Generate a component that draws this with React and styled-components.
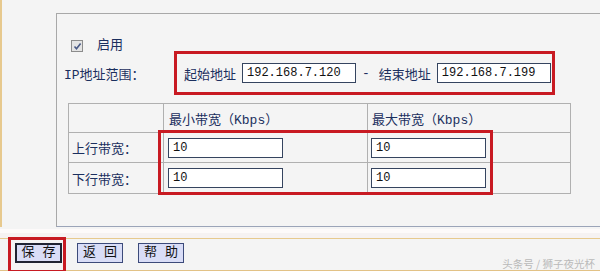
import React from 'react';
import styled, { createGlobalStyle } from 'styled-components';

const GlobalStyle = createGlobalStyle`
	html, body {
		margin:0;
		padding:0;
		background:#f4f4f4;
		overflow:hidden;
	}
	body {
		font-family:"Liberation Mono", "Noto Sans CJK SC", monospace;
		font-size:13px;
		color:#1b2f5e;
	}
`;

export const Page = styled.div`
	width:600px;
	height:271px;
	display:flex;
	flex-direction:column;
	background:#f4f4f4;
`;

export const Upper = styled.div`
	height:227px;
	padding:13px 0 0 54px;
	border-left:2px solid #e7c98e;
	box-sizing:border-box;
`;

export const Panel = styled.div`
	height:214px;
	box-sizing:border-box;
	border-top:1px solid #a8a8a8;
	border-left:1px solid #a8a8a8;
	border-bottom:1px solid #9ba4b8;
	display:flex;
	flex-direction:column;
	padding:26px 0 0 7px;
`;

export const CheckRow = styled.label`
	display:flex;
	align-items:center;
	padding-left:7px;
	height:12px;
	gap:14px;
	line-height:12px;
`;

export const CheckBox = styled.span`
	width:10px;
	height:10px;
	border:1px solid #8c8c8c;
	background:#e4e4e4;
	display:flex;
	align-items:center;
	justify-content:center;
`;

export const Row = styled.div`
	display:flex;
	align-items:center;
	margin-top:${props => props.top || 0}px;
`;

export const Label = styled.span`
	width:${props => props.width}px;
	flex:none;
	white-space:nowrap;
`;

export const AddrGroup = styled.div`
	display:flex;
	align-items:center;
	border:3px solid #c81a22;
	padding:9px 1px 9px 7px;
	white-space:nowrap;
`;

export const Field = styled.input`
	width:${props => props.width || 115}px;
	height:20px;
	box-sizing:border-box;
	margin-left:${props => props.gap || 0}px;
	border:1px solid #35445f;
	background:#fff;
	padding:0 4px;
	font-family:"Liberation Mono", monospace;
	font-size:12px;
	color:#111;
	outline:none;
`;

export const Dash = styled.span`
	margin:0 9px 0 6px;
`;

export const TableWrap = styled.div`
	position:relative;
	margin:8px 0 0 4px;
	width:502px;
`;

export const Grid = styled.table`
	border-collapse:collapse;
	width:502px;
	table-layout:fixed;
	border:1px solid #a9a9a9;
`;

export const Cell = styled.td`
	border:1px solid #b0b0b0;
	height:${props => props.h || 29}px;
	padding:0 0 0 ${props => props.pad || 4}px;
	box-sizing:border-box;
	white-space:nowrap;
	vertical-align:middle;
`;

export const Mark = styled.div`
	position:absolute;
	left:${props => props.l}px;
	top:${props => props.t}px;
	width:${props => props.w}px;
	height:${props => props.h}px;
	box-sizing:border-box;
	border:3px solid #c81a22;
	pointer-events:none;
`;

export const Divider = styled.div`
	height:12px;
	background:linear-gradient(#f4f4f4 0 2px, #fdfafa 2px 6px, #f6f2f2 6px 11px, #e7c98e 11px 12px);
`;

export const ButtonBar = styled.div`
	height:28px;
	border-bottom:1px solid #e2c286;
	display:flex;
	align-items:flex-start;
	padding:4px 0 0 15px;
	box-sizing:content-box;
	gap:15px;
`;

export const ButtonHold = styled.span`
	position:relative;
	display:flex;
`;

export const Button = styled.button`
	width:${props => props.width || 46}px;
	height:20px;
	padding:0;
	background:#d9ddf7;
	border:${props => props.active ? '2px solid #202433' : '1px solid #3c4a7a'};
	font-family:"Liberation Mono", "Noto Sans CJK SC", monospace;
	font-size:13px;
	color:#111;
	line-height:16px;
	white-space:pre;
`;

export const Watermark = styled.span`
	margin-left:auto;
	align-self:flex-end;
	padding-right:5px;
	font-family:"Noto Sans CJK SC", sans-serif;
	font-size:10.5px;
	line-height:12px;
	color:#b9b9b9;
`;

const Check = () => (
	<CheckBox>
		<svg width="9" height="9" viewBox="0 0 9 9">
			<path d="M1.5 4.5 L3.5 6.8 L7.6 1.6" fill="none" stroke="#4a5a86" strokeWidth="1.6" />
		</svg>
	</CheckBox>
);

const rows = [
	{ name: '上行带宽：', min: '10', max: '10' },
	{ name: '下行带宽：', min: '10', max: '10' },
];

export default function App() {
	return (
		<Page>
			<GlobalStyle />
			<Upper>
				<Panel>
					<CheckRow>
						<Check />
						<span>启用</span>
					</CheckRow>
					<Row top={-1}>
						<Label width={110}>IP地址范围：</Label>
						<AddrGroup>
							<span>起始地址</span>
							<Field gap={6} width={114} defaultValue="192.168.7.120" />
							<Dash>-</Dash>
							<span>结束地址</span>
							<Field gap={6} width={114} defaultValue="192.168.7.199" />
						</AddrGroup>
					</Row>
					<TableWrap>
						<Grid>
							<colgroup>
								<col style={{ width: 95 }} />
								<col style={{ width: 204 }} />
								<col style={{ width: 203 }} />
							</colgroup>
							<tbody>
								<tr>
									<Cell h={29} />
									<Cell h={29} pad={5}>最小带宽（Kbps）</Cell>
									<Cell h={29} pad={4}>最大带宽（Kbps）</Cell>
								</tr>
								{rows.map((r, i) => (
									<tr key={r.name}>
										<Cell h={i === 0 ? 30 : 31} pad={3}>{r.name}</Cell>
										<Cell h={i === 0 ? 30 : 31} pad={4}><Field defaultValue={r.min} /></Cell>
										<Cell h={i === 0 ? 30 : 31} pad={3}><Field defaultValue={r.max} /></Cell>
									</tr>
								))}
							</tbody>
						</Grid>
						<Mark l={90} t={27} w={335} h={65} />
					</TableWrap>
				</Panel>
			</Upper>
			<Divider />
			<ButtonBar>
				<ButtonHold>
					<Button active width={47}>保 存</Button>
					<Mark l={-7} t={-6} w={58} h={36} />
				</ButtonHold>
				<Button>返 回</Button>
				<Button>帮 助</Button>
				<Watermark>头条号 / 狮子夜光杯</Watermark>
			</ButtonBar>
		</Page>
	);
}
